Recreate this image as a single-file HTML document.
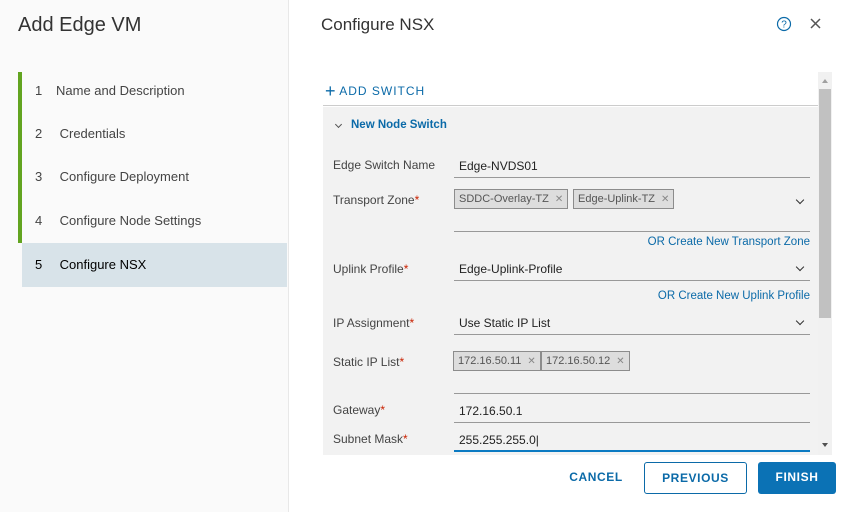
<!DOCTYPE html>
<html><head><style>
*{margin:0;padding:0;box-sizing:border-box}
body{width:855px;height:512px;overflow:hidden;font-family:"Liberation Sans",sans-serif;background:#fff;position:relative;color:#333}
.a{position:absolute}
.left{left:0;top:0;width:289px;height:512px;background:#fafafa;border-right:1px solid #e8e8e8}
.step{position:absolute;left:22px;width:265px;height:43px;font-size:13px;color:#444;line-height:43px}
.step span{display:inline-block;width:34px;padding-left:13px}
.lbl{position:absolute;left:333px;font-size:12px;color:#444}
.req{color:#c92100}
.inp{position:absolute;left:454px;width:356px;border-bottom:1px solid #999;font-size:12px;color:#222;padding-left:5px}
.tag{position:absolute;height:20px;border:1px solid #8c8c8c;background:#ddd;font-size:11px;color:#555;line-height:18px;padding:0 4px}
.tag i{font-style:normal;color:#888;margin-left:6px;font-size:10px}
.link{position:absolute;right:45px;font-size:11.5px;color:#0b6aa8}
.chev{position:absolute;left:797px;width:6px;height:6px;border-right:1.3px solid #333;border-bottom:1.3px solid #333;transform:rotate(45deg)}
.btn{position:absolute;top:462px;height:32px;font-size:12px;font-weight:bold;letter-spacing:0.6px;line-height:30px;text-align:center;border-radius:3px}
</style></head><body>
<div class="a left"></div>
<div class="a" style="left:18px;top:14px;font-size:20px;color:#333">Add Edge VM</div>
<div class="a" style="left:18px;top:72px;width:4px;height:171px;background:#62a420"></div>
<div class="a" style="left:22px;top:243px;width:265px;height:44px;background:#d8e3e9"></div>
<div class="step" style="top:69px"><span>1</span>Name and Description</div>
<div class="step" style="top:112px"><span>2</span>&nbsp;Credentials</div>
<div class="step" style="top:155px"><span>3</span>&nbsp;Configure Deployment</div>
<div class="step" style="top:199px"><span>4</span>&nbsp;Configure Node Settings</div>
<div class="step" style="top:243px;color:#000"><span>5</span>&nbsp;Configure NSX</div>

<div class="a" style="left:321px;top:15px;font-size:17px;color:#333">Configure NSX</div>
<svg class="a" style="left:776px;top:16px" width="16" height="16" viewBox="0 0 16 16"><circle cx="8" cy="8" r="6.5" fill="none" stroke="#0b6aa8" stroke-width="1.2"/><text x="8" y="11.5" font-size="10" text-anchor="middle" fill="#0b6aa8" font-family="Liberation Sans">?</text></svg>
<svg class="a" style="left:810px;top:18px" width="11" height="11"><path d="M1 1L10 10M10 1L1 10" stroke="#555" stroke-width="1.5"/></svg>

<div class="a" style="left:323px;top:72px;width:495px;height:34px;border-bottom:1px solid #ccc"></div>
<div class="a" style="left:325px;top:81px;font-size:12px;color:#0b6aa8;letter-spacing:1px"><span style="font-size:18px;vertical-align:-2px;letter-spacing:0;font-weight:normal">+</span> ADD SWITCH</div>
<div class="a" style="left:323px;top:107px;width:495px;height:348px;background:#f2f2f2"></div>
<div class="a" style="left:818px;top:72px;width:14px;height:383px;background:#f1f1f1"></div>
<div class="a" style="left:819px;top:89px;width:12px;height:229px;background:#c1c1c1"></div>
<div class="a" style="left:822px;top:79px;border:3px solid transparent;border-bottom:4px solid #a0a0a0;border-top:0"></div>
<div class="a" style="left:822px;top:443px;border:3px solid transparent;border-top:4px solid #505050;border-bottom:0"></div>

<div class="a" style="left:336px;top:122px;width:5px;height:5px;border-right:1px solid #555;border-bottom:1px solid #555;transform:rotate(45deg)"></div>
<div class="a" style="left:351px;top:119px;font-size:11.5px;font-weight:bold;color:#0b6aa8">New Node Switch</div>

<div class="lbl" style="top:158px">Edge Switch Name</div>
<div class="inp" style="top:159px;height:19px">Edge-NVDS01</div>
<div class="lbl" style="top:193px">Transport Zone<span class="req">*</span></div>
<div class="inp" style="top:190px;height:42px"></div>
<div class="tag" style="left:454px;top:189px">SDDC-Overlay-TZ<i>✕</i></div>
<div class="tag" style="left:573px;top:189px">Edge-Uplink-TZ<i>✕</i></div>
<div class="chev" style="top:197px"></div>
<div class="link" style="top:236px">OR Create New Transport Zone</div>

<div class="lbl" style="top:262px">Uplink Profile<span class="req">*</span></div>
<div class="inp" style="top:262px;height:19px">Edge-Uplink-Profile</div>
<div class="chev" style="top:264px"></div>
<div class="link" style="top:290px">OR Create New Uplink Profile</div>

<div class="lbl" style="top:316px">IP Assignment<span class="req">*</span></div>
<div class="inp" style="top:316px;height:19px">Use Static IP List</div>
<div class="chev" style="top:318px"></div>

<div class="lbl" style="top:355px">Static IP List<span class="req">*</span></div>
<div class="inp" style="top:352px;height:42px"></div>
<div class="tag" style="left:453px;top:351px">172.16.50.11<i>✕</i></div>
<div class="tag" style="left:541px;top:351px">172.16.50.12<i>✕</i></div>

<div class="lbl" style="top:403px">Gateway<span class="req">*</span></div>
<div class="inp" style="top:404px;height:19px">172.16.50.1</div>
<div class="lbl" style="top:432px">Subnet Mask<span class="req">*</span></div>
<div class="inp" style="top:433px;height:19px;border-bottom:2px solid #0b7ac2">255.255.255.0|</div>

<div class="btn" style="left:560px;width:72px;color:#0b6aa8">CANCEL</div>
<div class="btn" style="left:644px;width:103px;border:1px solid #0b6aa8;color:#0b6aa8">PREVIOUS</div>
<div class="btn" style="left:758px;width:78px;background:#0b72b5;color:#fff">FINISH</div>
</body></html>
